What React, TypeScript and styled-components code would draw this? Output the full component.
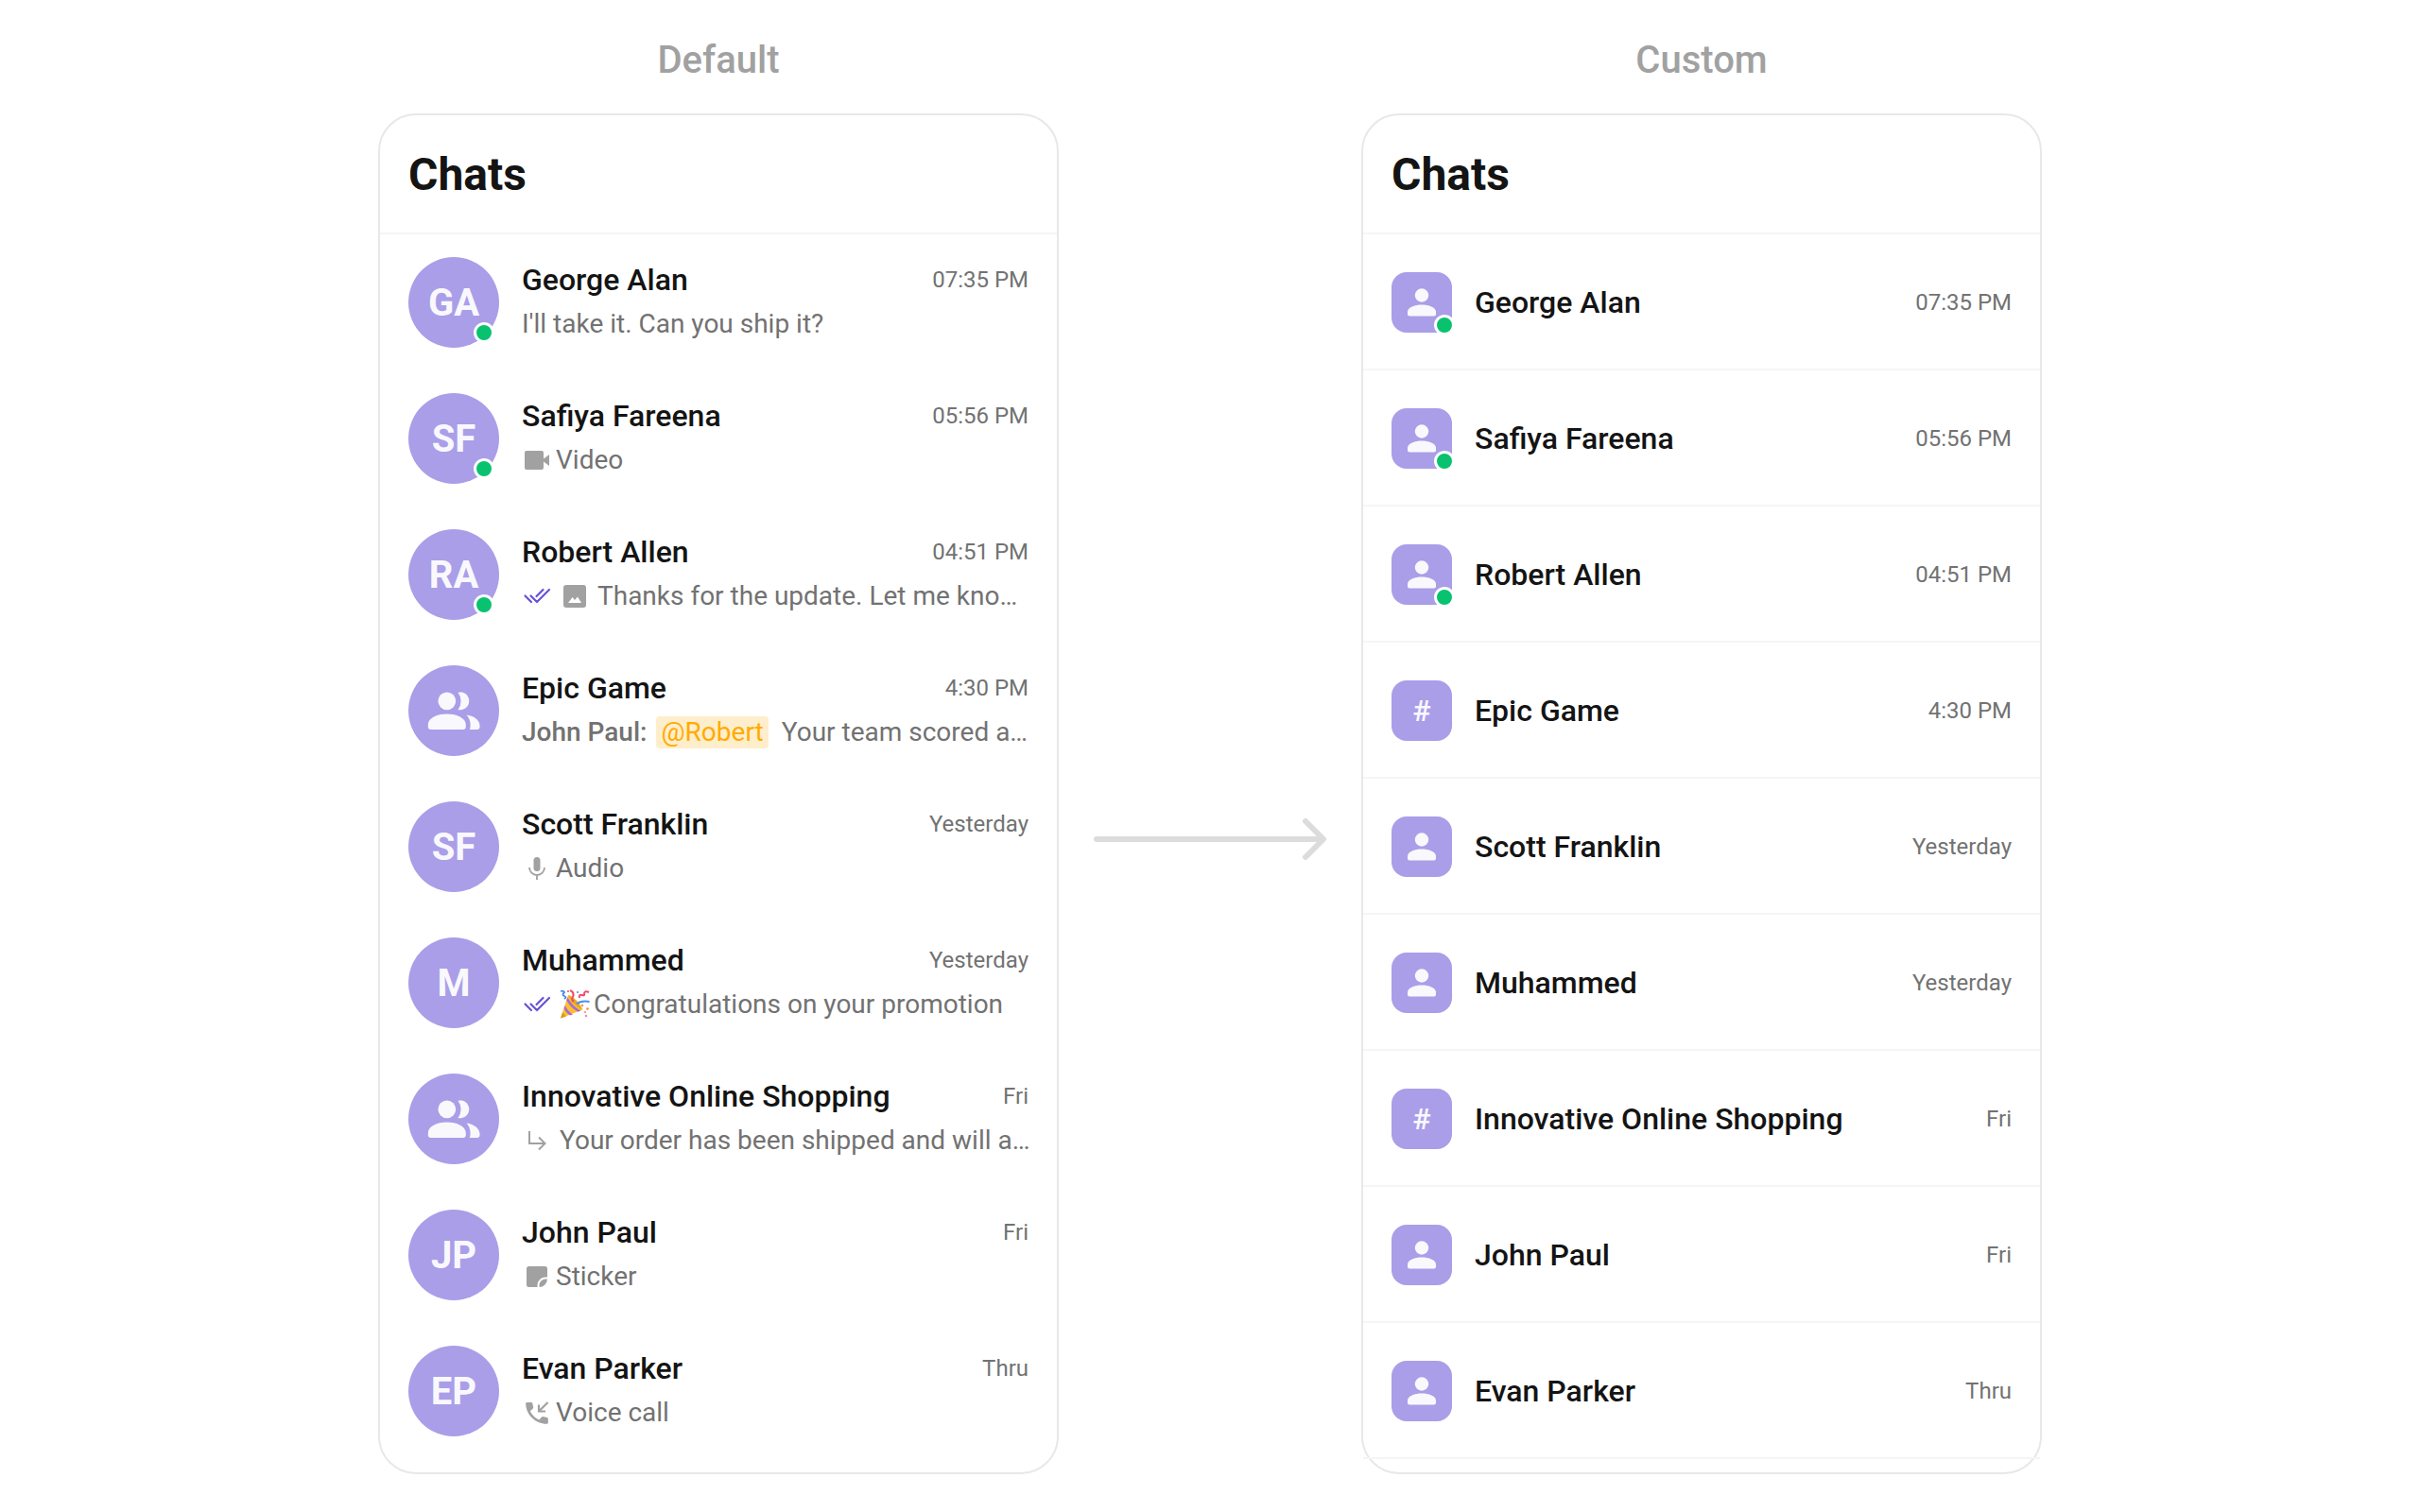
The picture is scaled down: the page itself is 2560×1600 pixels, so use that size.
import React from "react";
import styled, { createGlobalStyle } from "styled-components";

const GlobalStyle = createGlobalStyle`
  *, *::before, *::after { box-sizing: border-box; }
  body { margin: 0; background: #fff; font-family: Roboto, "Liberation Sans", sans-serif; color: #141414; }
  h1, h2, p, ul { margin: 0; padding: 0; }
`;

const Page = styled.main`
  display: grid;
  grid-template-columns: minmax(0, 720px) 320px minmax(0, 720px);
  justify-content: center;
  padding: 40px 24px 40px;
`;

const Column = styled.section`
  display: flex;
  flex-direction: column;
  gap: 32px;
`;

const ColumnTitle = styled.h1`
  font-size: 40px;
  line-height: 48px;
  font-weight: 500;
  text-align: center;
  color: #a1a1a1;
`;

const Panel = styled.div`
  flex: 1;
  border: 2px solid #e8e8e8;
  border-radius: 40px;
  padding-bottom: 14px;
  background: #fff;
`;

const PanelHeader = styled.header`
  padding: 34px 30px 32px;
  border-bottom: 2px solid #f5f5f5;
`;

const PanelTitle = styled.h2`
  font-size: 48px;
  line-height: 58px;
  font-weight: 700;
`;

const List = styled.ul`
  list-style: none;
`;

const Row = styled.li<{ $divided?: boolean }>`
  display: flex;
  align-items: center;
  gap: 24px;
  height: 144px;
  padding: 0 30px;
  box-shadow: ${(p) => (p.$divided ? "inset 0 -2px #f5f5f5" : "none")};
`;

const Avatar = styled.div<{ $square?: boolean }>`
  position: relative;
  flex: none;
  display: flex;
  align-items: center;
  justify-content: center;
  width: ${(p) => (p.$square ? 64 : 96)}px;
  height: ${(p) => (p.$square ? 64 : 96)}px;
  border-radius: ${(p) => (p.$square ? "16px" : "50%")};
  background: #aa9ee8;
  color: #f9f8fd;
  font-size: ${(p) => (p.$square ? 32 : 40)}px;
  line-height: 48px;
  font-weight: ${(p) => (p.$square ? 500 : 700)};
`;

const Initials = styled.span`
  padding-top: 2px;
`;

const Status = styled.span<{ $square?: boolean }>`
  position: absolute;
  right: ${(p) => (p.$square ? -3 : 5)}px;
  bottom: ${(p) => (p.$square ? -3 : 5)}px;
  width: 22px;
  height: 22px;
  border: 3px solid #fff;
  border-radius: 50%;
  background: #09c26f;
`;

const Body = styled.div`
  flex: 1;
  min-width: 0;
  display: flex;
  flex-direction: column;
  gap: 11px;
  padding-bottom: 3px;
`;

const TopLine = styled.div`
  flex: 1;
  display: flex;
  justify-content: space-between;
  gap: 16px;
`;

const Name = styled.span`
  font-size: 32px;
  line-height: 38px;
  font-weight: 500;
  white-space: nowrap;
`;

const Time = styled.time`
  font-size: 24px;
  line-height: 38px;
  color: #727272;
  white-space: nowrap;
`;

const Preview = styled.div<{ $gap?: number }>`
  display: flex;
  align-items: center;
  gap: ${(p) => p.$gap ?? 8}px;
  font-size: 28px;
  line-height: 34px;
  color: #727272;
  white-space: nowrap;
`;

const Sender = styled.span`
  font-weight: 500;
`;

const Mention = styled.span`
  padding: 0 5px;
  margin-right: 4px;
  border-radius: 4px;
  background: #ffeecc;
  color: #ffab00;
`;

const EmojiText = styled.span`
  display: flex;
  align-items: center;
  gap: 4px;
`;

const ArrowCell = styled.div`
  display: flex;
  align-items: center;
  justify-content: center;
  padding-top: 176px;
`;

const Icon = styled.svg`
  display: block;
  flex: none;
  overflow: visible;
`;

const VideoIcon = () => (
  <Icon width="32" height="32" viewBox="0 0 32 32" fill="#a1a1a1" aria-hidden="true">
    <path d="M5 6H21a2 2 0 0 1 2 2V14.500L29 10V22L23 17.500V24a2 2 0 0 1-2 2H5a2 2 0 0 1-2-2V8a2 2 0 0 1 2-2Z" />
  </Icon>
);

const MicIcon = () => (
  <Icon width="32" height="32" viewBox="0 0 32 32" aria-hidden="true">
    <rect x="12.500" y="4" width="7" height="15" rx="3.500" fill="#a1a1a1" />
    <path d="M8 15a8 8 0 0 0 16 0M16 23v5" fill="none" stroke="#a1a1a1" strokeWidth="1.800" />
  </Icon>
);

const ReadIcon = () => (
  <Icon width="32" height="32" viewBox="0 0 32 32" fill="none" stroke="#6852d6" strokeWidth="2.200" strokeLinecap="round" strokeLinejoin="round" aria-hidden="true">
    <path d="M3.500 15.500L10 22M9.500 15.500L16 22L29 9M15.500 16L22.500 9" />
  </Icon>
);

const ImageIcon = () => (
  <Icon width="32" height="32" viewBox="0 0 32 32" aria-hidden="true">
    <rect x="4" y="4" width="24" height="24" rx="3" fill="#a1a1a1" />
    <path d="M9 23L13.500 17L16 20L19 16.500L23 23Z" fill="#fff" />
  </Icon>
);

const ReplyIcon = () => (
  <Icon width="32" height="32" viewBox="0 0 32 32" fill="none" stroke="#a1a1a1" strokeWidth="2" aria-hidden="true">
    <path d="M8 6V19H24M18 12.500L24.500 19L18 25.500" />
  </Icon>
);

const StickerIcon = () => (
  <Icon width="32" height="32" viewBox="0 0 32 32" fill="#a1a1a1" aria-hidden="true">
    <path d="M7.500 5H24.500a2.500 2.500 0 0 1 2.500 2.500V16.500H25a8.500 8.500 0 0 0-8.500 8.500V27H7.500a2.500 2.500 0 0 1-2.500-2.500V7.500A2.500 2.500 0 0 1 7.500 5Z" />
    <path d="M27 18.500a9 9 0 0 1-8.500 8.500V25a6.500 6.500 0 0 1 6.500-6.500Z" />
  </Icon>
);

const CallIcon = () => (
  <Icon width="32" height="32" viewBox="0 0 32 32" aria-hidden="true">
    <path d="M5.500 5H10a1.300 1.300 0 0 1 1.300 1L12.200 10.300a1.300 1.300 0 0 1-.4 1.200L8.800 14.300A19 19 0 0 0 18.200 23.400L21 20.500a1.300 1.300 0 0 1 1.200-.4L26.800 21a1.300 1.300 0 0 1 1 1.300V26.500a1.300 1.300 0 0 1-1.300 1.300C14 27.800 4.200 17.500 4.200 6.300A1.300 1.300 0 0 1 5.500 5Z" fill="#a1a1a1" />
    <path d="M27.500 5L18.500 14M18 7.500V14.500H25" fill="none" stroke="#a1a1a1" strokeWidth="2.200" />
  </Icon>
);

const PartyIcon = () => (
  <Icon width="32" height="32" viewBox="0 0 32 32" aria-label="party popper" role="img">
    <path d="M1 30.500L9 6C14 7 23 16 24 21.500Z" fill="#fbc02d" />
    <path d="M5.500 17C8 21 10.500 24.500 14 26.500L11 27.500C8 25.500 6 23 4.600 20ZM8.300 8.500C12 14 16 19.500 22.500 22.500L19.500 23.700C14 21 10 16.500 7.200 11.500Z" fill="#ab6bd0" />
    <path d="M1 30.500L3 24.500L7 28.500Z" fill="#d99a1e" />
    <path d="M9 6C14 7 23 16 24 21.500C18 19 11 12 9 6Z" fill="#e8a921" />
    <path d="M18 15.500C22 12 26 12 31.500 13" fill="none" stroke="#4a90f5" strokeWidth="2" />
    <path d="M1 2Q4 1 5 3Q2 6 5 7Q8 8 5 10" fill="none" stroke="#4285f4" strokeWidth="1.800" />
    <path d="M11 1Q16 3 14 8Q12 11 15 13M21 9Q20 5 24 6Q27 7 26 4Q27 1 31 3" fill="none" stroke="#ee4b6a" strokeWidth="2" />
    <g fill="#f28b50"><circle cx="24" cy="17" r="1.200" /><circle cx="29.500" cy="20.500" r="1.300" /><circle cx="28" cy="28" r="1.300" fill="#ef8fb4" /><circle cx="27" cy="24" r="1" /><circle cx="19" cy="3" r="1" fill="#4285f4" /><circle cx="9" cy="2" r="1" fill="#ee4b6a" /></g>
  </Icon>
);

const GroupIcon = () => (
  <Icon width="56" height="56" viewBox="0 0 56 56" fill="#f9f8fd" aria-hidden="true">
    <circle cx="20.800" cy="17.800" r="9.400" />
    <path d="M32.500 8.700a9.400 9.400 0 1 1 0 18.200a15 15 0 0 0 0-18.200Z" />
    <path d="M0.800 43C0.800 36 10 31.500 20.800 31.500S40.800 36 40.800 43V45a3 3 0 0 1-3 3H3.800a3 3 0 0 1-3-3Z" />
    <path d="M41.500 32.500C50 33.500 55.500 38.500 55.500 44V45a3 3 0 0 1-3 3H44.800C46 45 46.500 38 41.500 32.500Z" />
  </Icon>
);

const PersonIcon = () => (
  <Icon width="32" height="32" viewBox="0 0 32 32" fill="#f9f8fd" aria-hidden="true">
    <circle cx="16" cy="8.500" r="7.200" />
    <path d="M1 26C1 21 9 18.500 16 18.500S31 21 31 26V28.500a2 2 0 0 1-2 2H3a2 2 0 0 1-2-2Z" />
  </Icon>
);

const LongArrow = () => (
  <Icon width="246" height="44" viewBox="0 0 246 44" fill="none" stroke="#dcdcdc" strokeWidth="6" strokeLinecap="round" strokeLinejoin="round" aria-hidden="true">
    <path d="M3 22H242M224 3L243 22L224 41" />
  </Icon>
);

type Chat = {
  name: string;
  time: string;
  initials?: string;
  online?: boolean;
  gap?: number;
  preview: React.ReactNode;
};

const chats: Chat[] = [
  { name: "George Alan", time: "07:35 PM", initials: "GA", online: true, preview: "I'll take it. Can you ship it?" },
  { name: "Safiya Fareena", time: "05:56 PM", initials: "SF", online: true, gap: 4, preview: <><VideoIcon /><span>Video</span></> },
  { name: "Robert Allen", time: "04:51 PM", initials: "RA", online: true, preview: <><ReadIcon /><ImageIcon /><span>Thanks for the update. Let me kno…</span></> },
  { name: "Epic Game", time: "4:30 PM", gap: 10, preview: <><Sender>John Paul:</Sender><Mention>@Robert</Mention><span>Your team scored a…</span></> },
  { name: "Scott Franklin", time: "Yesterday", initials: "SF", gap: 4, preview: <><MicIcon /><span>Audio</span></> },
  { name: "Muhammed", time: "Yesterday", initials: "M", preview: <><ReadIcon /><EmojiText><PartyIcon /><span>Congratulations on your promotion</span></EmojiText></> },
  { name: "Innovative Online Shopping", time: "Fri", preview: <><ReplyIcon /><span>Your order has been shipped and will a…</span></> },
  { name: "John Paul", time: "Fri", initials: "JP", gap: 4, preview: <><StickerIcon /><span>Sticker</span></> },
  { name: "Evan Parker", time: "Thru", initials: "EP", gap: 4, preview: <><CallIcon /><span>Voice call</span></> },
];

export default function App() {
  return (
    <>
      <GlobalStyle />
      <Page>
        <Column>
          <ColumnTitle>Default</ColumnTitle>
          <Panel>
            <PanelHeader><PanelTitle>Chats</PanelTitle></PanelHeader>
            <List>
              {chats.map((c) => (
                <Row key={c.name}>
                  <Avatar>
                    {c.initials ? <Initials>{c.initials}</Initials> : <GroupIcon />}
                    {c.online && <Status />}
                  </Avatar>
                  <Body>
                    <TopLine><Name>{c.name}</Name><Time>{c.time}</Time></TopLine>
                    <Preview $gap={c.gap}>{c.preview}</Preview>
                  </Body>
                </Row>
              ))}
            </List>
          </Panel>
        </Column>
        <ArrowCell><LongArrow /></ArrowCell>
        <Column>
          <ColumnTitle>Custom</ColumnTitle>
          <Panel>
            <PanelHeader><PanelTitle>Chats</PanelTitle></PanelHeader>
            <List>
              {chats.map((c) => (
                <Row key={c.name} $divided>
                  <Avatar $square>
                    {c.initials ? <PersonIcon /> : "#"}
                    {c.online && <Status $square />}
                  </Avatar>
                  <TopLine><Name>{c.name}</Name><Time>{c.time}</Time></TopLine>
                </Row>
              ))}
            </List>
          </Panel>
        </Column>
      </Page>
    </>
  );
}
